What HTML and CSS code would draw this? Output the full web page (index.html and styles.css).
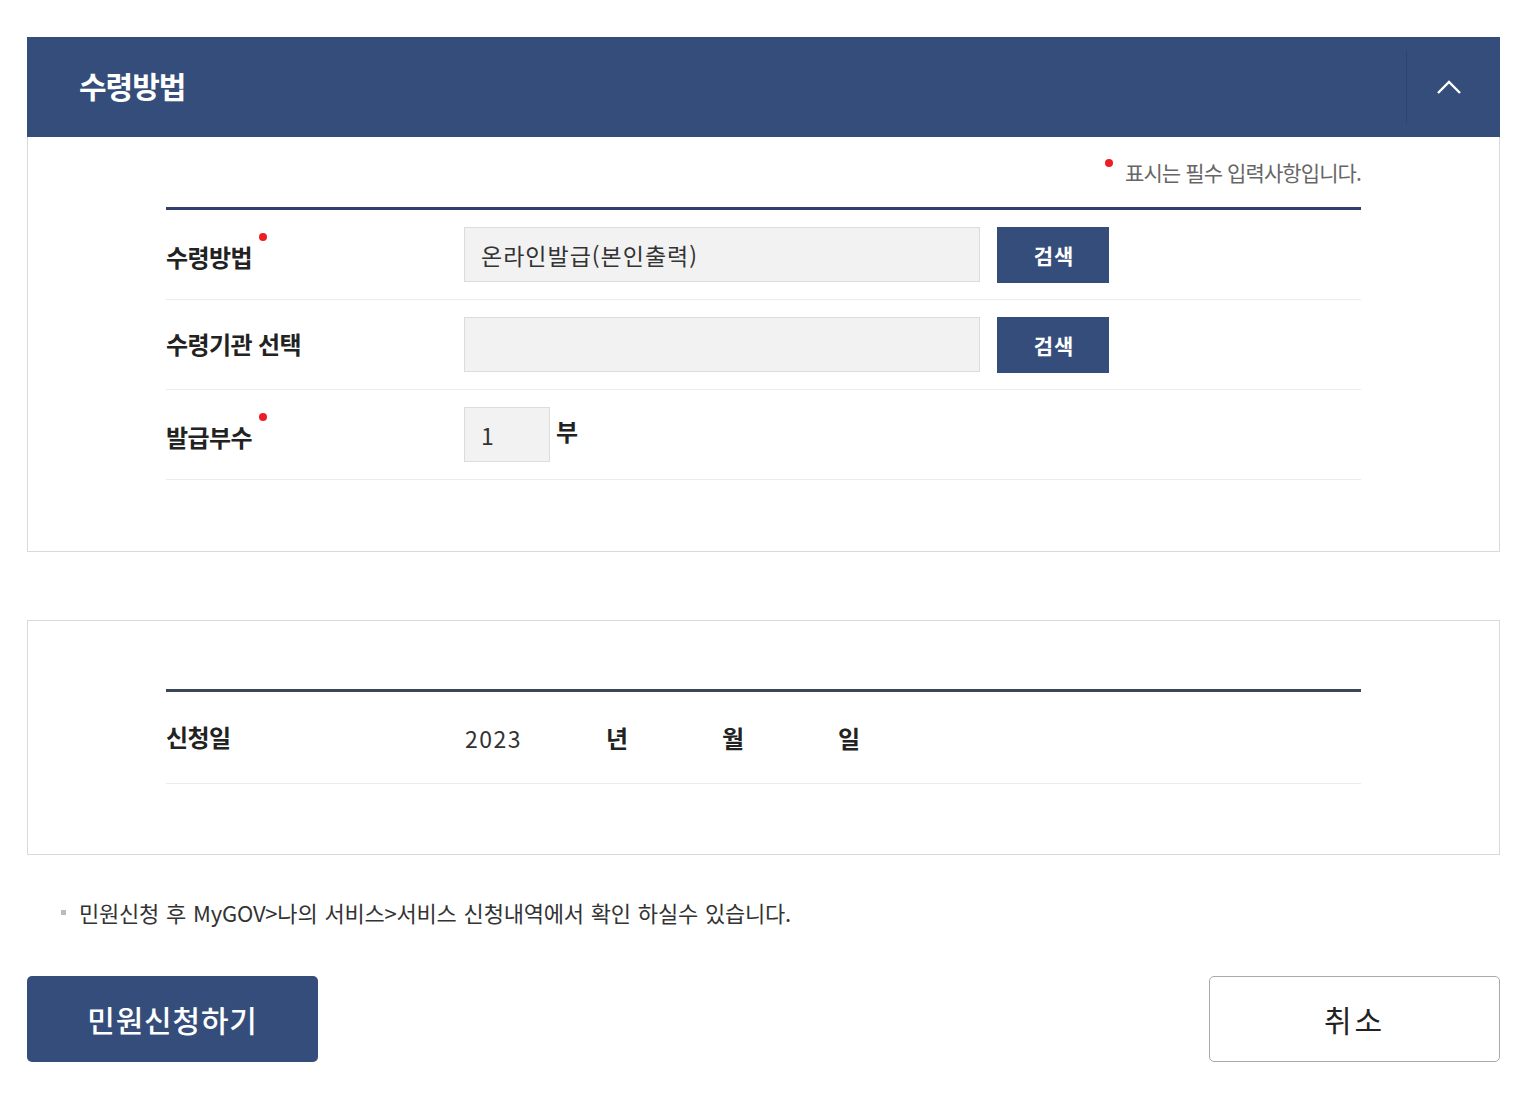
FILE: index.html
```html
<!DOCTYPE html>
<html lang="ko">
<head>
<meta charset="utf-8">
<title>수령방법</title>
<link rel="stylesheet" href="styles.css">
</head>
<body>
<div class="page">
  <section class="panel">
    <div class="panel-head">
      <h2 class="panel-title">수령방법</h2>
      <button class="toggle" type="button" aria-label="접기">
        <svg width="26" height="16" viewBox="0 0 26 16"><path d="M2 14 L13 3 L24 14" fill="none" stroke="#fff" stroke-width="2.4"/></svg>
      </button>
    </div>
    <div class="panel-body">
      <p class="req-note"><span class="dot"></span>표시는 필수 입력사항입니다.</p>
      <div class="form-table">
        <div class="row">
          <div class="label">수령방법<span class="dot sup"></span></div>
          <div class="field">
            <div class="input wide">온라인발급(본인출력)</div>
            <button class="btn-search" type="button">검색</button>
          </div>
        </div>
        <div class="row">
          <div class="label">수령기관 선택</div>
          <div class="field">
            <div class="input wide"></div>
            <button class="btn-search" type="button">검색</button>
          </div>
        </div>
        <div class="row">
          <div class="label">발급부수<span class="dot sup"></span></div>
          <div class="field">
            <div class="input small">1</div>
            <span class="unit">부</span>
          </div>
        </div>
      </div>
    </div>
  </section>

  <section class="panel panel2">
    <div class="panel-body body2">
      <div class="form-table dark">
        <div class="row row-date">
          <div class="label">신청일</div>
          <div class="field date">
            <span class="year">2023</span>
            <span class="du">년</span>
            <span class="du">월</span>
            <span class="du">일</span>
          </div>
        </div>
      </div>
    </div>
  </section>

  <p class="info"><span class="bullet"></span>민원신청 후 MyGOV&gt;나의 서비스&gt;서비스 신청내역에서 확인 하실수 있습니다.</p>

  <div class="actions">
    <button class="btn-primary" type="button">민원신청하기</button>
    <button class="btn-cancel" type="button">취소</button>
  </div>
</div>
</body>
</html>
```

FILE: styles.css
```css
* { box-sizing: border-box; }
html, body { margin: 0; padding: 0; background: #fff; }
body {
  font-family: "Noto Sans CJK KR", "Noto Sans", "Liberation Sans", sans-serif;
  color: #222;
}
.page {
  width: 1473px;
  margin-left: 27px;
  padding-top: 37px;
}
.panel {
  border: 1px solid #d9d9d9;
  border-top: none;
}
.panel-head {
  height: 100px;
  background: #344d7a;
  margin: 0 -1px;
  display: flex;
  align-items: center;
  justify-content: space-between;
}
.panel-title {
  margin: 0 0 4px 52px;
  color: #fff;
  font-size: 30px;
  font-weight: 700;
  letter-spacing: -1px;
}
.toggle {
  width: 94px;
  height: 74px;
  border: none;
  border-left: 1px solid #2d4470;
  background: transparent;
  display: flex;
  align-items: center;
  justify-content: center;
  padding: 0 9px 0 0;
}
.panel-body {
  padding: 14px 138px 71px 138px;
}
.req-note {
  margin: 0;
  text-align: right;
  font-size: 21px;
  color: #666;
  letter-spacing: -0.9px;
  line-height: 42px;
  height: 56px;
}
.req-note .dot { margin-right: 12px; vertical-align: 14px; }
.dot {
  display: inline-block;
  width: 8px;
  height: 8px;
  border-radius: 50%;
  background: #ee1c25;
}
.dot.sup { vertical-align: 26px; margin-left: 7px; }
.form-table {
  border-top: 3px solid #2f3f6f;
}
.form-table.dark { border-top-color: #3b4759; }
.row {
  height: 90px;
  border-bottom: 1px solid #ececec;
  display: flex;
  align-items: center;
}
.label {
  width: 298px;
  font-size: 24px;
  font-weight: 700;
  letter-spacing: -0.6px;
  color: #222;
  padding-bottom: 2px;
}
.field {
  display: flex;
  align-items: center;
}
.input {
  height: 55px;
  background: #f2f2f2;
  border: 1px solid #dcdcdc;
  font-size: 23px;
  color: #333;
  padding-left: 16px;
  display: flex;
  align-items: center;
  letter-spacing: 1px;
}
.input.wide { width: 516px; }
.input.small { width: 86px; }
.btn-search {
  margin-left: 17px;
  width: 112px;
  height: 56px;
  border: none;
  background: #344d7a;
  color: #fff;
  font-family: inherit;
  font-size: 21px;
  font-weight: 700;
  letter-spacing: 1px;
  padding: 0 0 0 2px;
}
.unit {
  margin-left: 6px;
  font-size: 24px;
  font-weight: 700;
  align-self: flex-start;
  margin-top: 6px;
}
.panel2 {
  margin-top: 68px;
  border-top: 1px solid #d9d9d9;
}
.body2 { padding: 68px 138px 70px 138px; }
.row-date { height: 92px; }
.date .year {
  font-size: 23px;
  width: 142px;
  color: #333;
  letter-spacing: 1.5px;
  padding-left: 1px;
}
.date .du {
  font-size: 24px;
  font-weight: 700;
  width: 116px;
}
.info {
  margin: 41px 0 0 34px;
  font-size: 22px;
  color: #333;
  letter-spacing: -0.2px;
  word-spacing: 1px;
  display: flex;
  align-items: center;
}
.bullet {
  width: 5px;
  height: 5px;
  background: #bbb;
  margin-right: 13px;
}
.actions {
  margin-top: 48px;
  display: flex;
  justify-content: space-between;
}
.btn-primary, .btn-cancel {
  width: 291px;
  height: 86px;
  border-radius: 5px;
  font-family: inherit;
  font-size: 30px;
  letter-spacing: 0.8px;
}
.btn-primary {
  background: #344d7a;
  border: none;
  color: #fff;
  font-weight: 500;
}
.btn-cancel {
  background: #fff;
  border: 1px solid #aaa;
  color: #222;
  letter-spacing: 3px;
}
```
